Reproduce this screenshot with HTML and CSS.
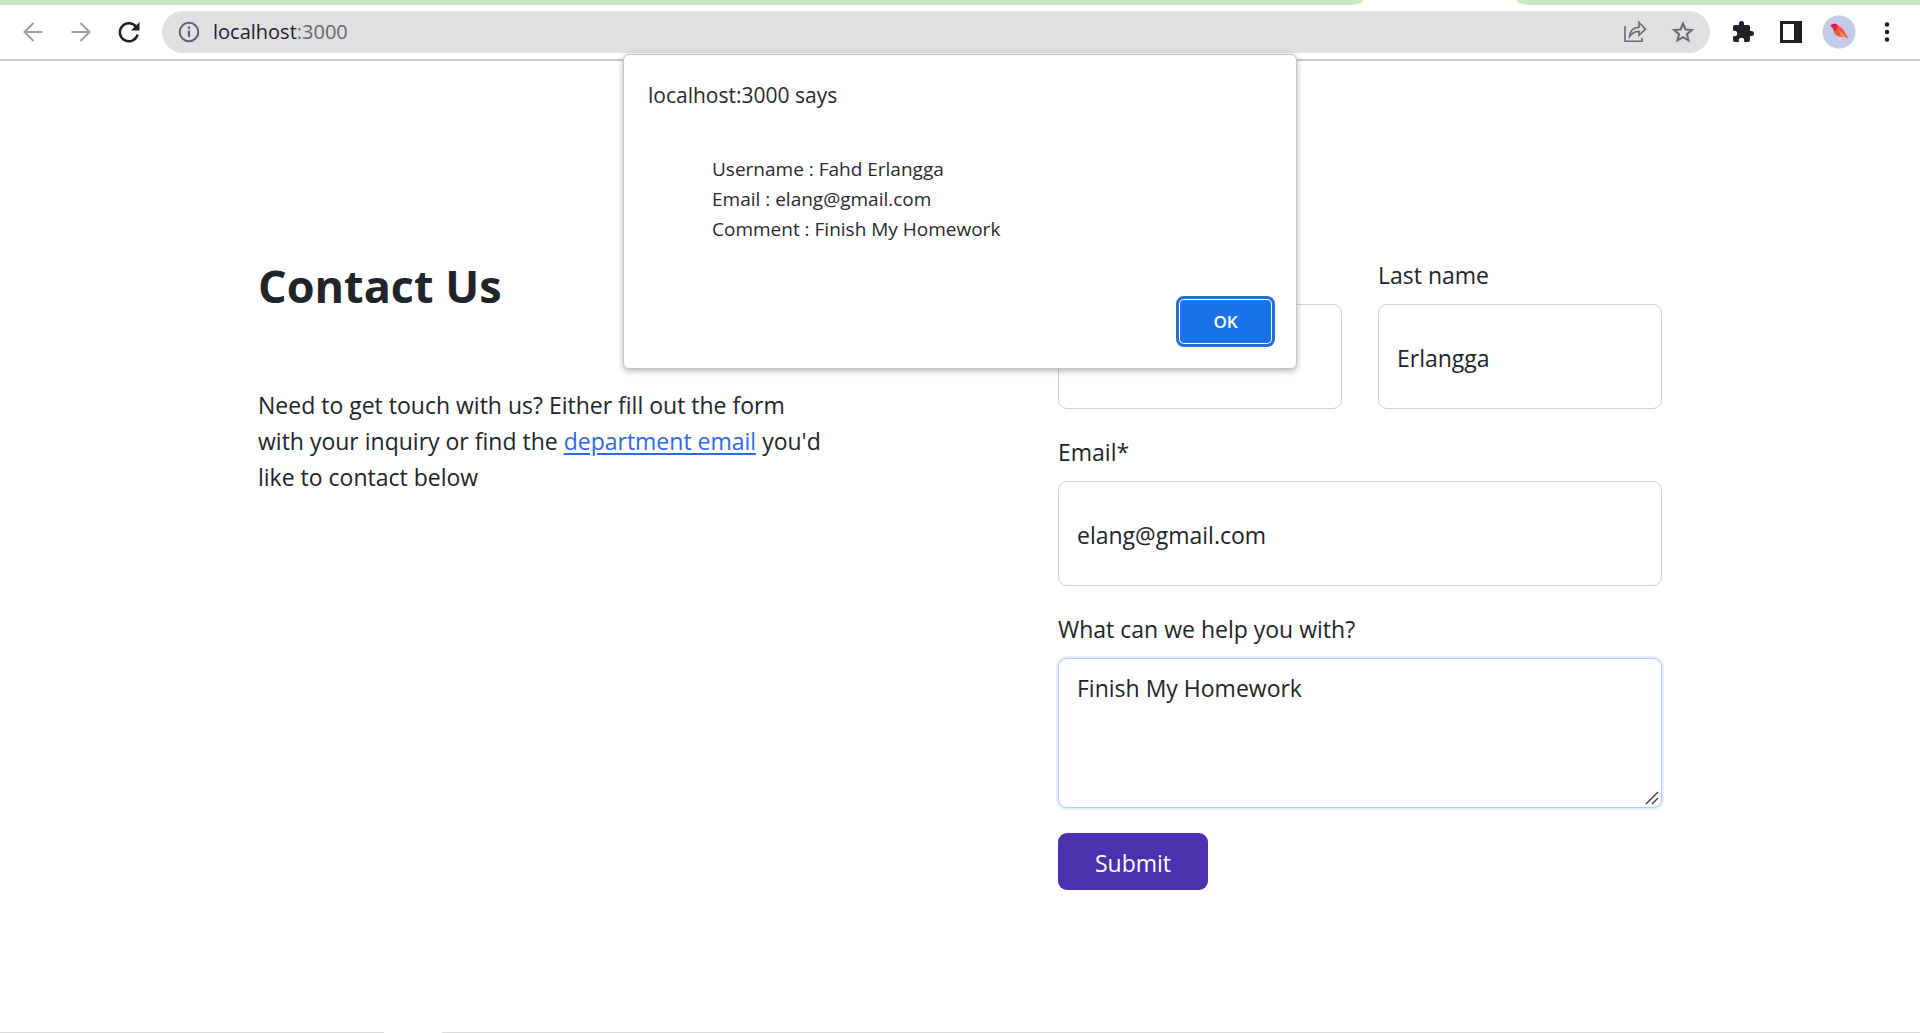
FILE: index.html
```html
<!DOCTYPE html>
<html lang="en">
<head>
<meta charset="utf-8">
<title>Contact Us</title>
<link rel="stylesheet" href="styles.css">
</head>
<body>
<header class="browser">
  <div class="tabs"><span class="tabs-before"></span><span class="tabs-after"></span></div>
  <div class="toolbar">
    <nav class="nav-buttons" aria-label="Browser navigation">
      <button class="icon-button muted" aria-label="Back"><svg width="24" height="24" viewBox="0 0 24 24" fill="none" stroke="currentColor" stroke-width="2"><path d="M21.500 12H3.500M12.500 3 3.500 12l9 9"/></svg></button>
      <button class="icon-button muted" aria-label="Forward"><svg width="24" height="24" viewBox="0 0 24 24" fill="none" stroke="currentColor" stroke-width="2"><path d="M2.500 12h18M11.500 3 20.500 12l-9 9"/></svg></button>
      <button class="icon-button" aria-label="Reload"><svg width="24" height="24" viewBox="0 0 24 24"><path d="M19.500 7.500A9 9 0 1 0 20.600 14.500" fill="none" stroke="currentColor" stroke-width="2.500"/><path d="M22.500 2v8.500h-8.500z" fill="currentColor"/></svg></button>
    </nav>
    <div class="address">
      <svg width="22" height="22" viewBox="0 0 22 22" fill="none" stroke="#5f6368" stroke-width="2"><circle cx="11" cy="11" r="9.300"/><path d="M11 9.500v6.500M11 5.500v2.500" stroke-width="2.200"/></svg>
      <span class="url">localhost<span class="port">:3000</span></span>
      <button class="icon-button soft" aria-label="Share"><svg width="24" height="24" viewBox="0 0 24 24" fill="none" stroke="currentColor" stroke-width="1.600"><path d="M2 6v15.200h17V18"/><path d="M6.500 16.500C7 10.500 10.500 7.500 16 7.200V2.500l6.500 6.700-6.500 6V11.500c-4.500-.2-7 1.500-9.500 5z"/></svg></button>
      <button class="icon-button soft" aria-label="Bookmark"><svg width="24" height="24" viewBox="0 0 24 24" fill="none" stroke="currentColor" stroke-width="2"><path d="m12 3.500 2.500 6 6.400.5-4.900 4.200 1.500 6.300-5.500-3.400-5.500 3.400L8 14.200 3.100 10l6.400-.5z"/></svg></button>
    </div>
    <div class="actions">
      <button class="icon-button" aria-label="Extensions"><svg width="24" height="24" viewBox="0 0 24 24" fill="currentColor"><path d="M20.500 11H19V7a2 2 0 0 0-2-2h-4V3.500a2.500 2.500 0 0 0-5 0V5H4a2 2 0 0 0-2 2v3.800h1.500a2.700 2.700 0 0 1 0 5.400H2V20a2 2 0 0 0 2 2h3.800v-1.500a2.700 2.700 0 0 1 5.400 0V22H17a2 2 0 0 0 2-2v-4h1.500a2.500 2.500 0 0 0 0-5z"/></svg></button>
      <button class="icon-button" aria-label="Side panel"><svg width="24" height="24" viewBox="0 0 24 24"><path d="M1 1h22v22H1z" fill="#202124"/><path d="M4 4h11v16H4z" fill="#fff"/></svg></button>
      <button class="icon-button avatar" aria-label="Profile"><svg width="34" height="34" viewBox="0 0 34 34"><circle cx="17" cy="17" r="16.500" fill="#c5cae9"/><path d="M8.500 11C9.500 8.300 13.500 8 15.500 10c3.500 2.500 6 4 7.500 7.500l3.500 5.500-4-1c-5.500.5-9.500-1-10.500-5.500-.4-2-.5-3.500-3.500-5.500z" fill="#f0573f"/><path d="M8.500 11C9.500 8.300 13.500 8 15.500 10c.5 2-.5 4.500-3.500 6.500-.8-2-.5-3.500-3.500-5.500z" fill="#dd1f4b"/><path d="m17 15 7 6.500-5 .3z" fill="#f98a55"/><path d="M16 22.500v3M18 22.500v3" stroke="#f0d3dd"/></svg></button>
      <button class="icon-button" aria-label="Menu"><svg width="24" height="24" viewBox="0 0 24 24" fill="currentColor"><circle cx="12" cy="4.500" r="2.300"/><circle cx="12" cy="12" r="2.300"/><circle cx="12" cy="19.500" r="2.300"/></svg></button>
    </div>
  </div>
</header>

<main class="page">
  <section class="intro">
    <h1>Contact Us</h1>
    <p>Need to get touch with us? Either fill out the form with your inquiry or find the <a href="#department">department email</a> you'd like to contact below</p>
  </section>
  <form class="contact-form">
    <div class="name-row">
      <div class="field"><label for="first">First name</label><input id="first" type="text"></div>
      <div class="field"><label for="last">Last name</label><input id="last" type="text" value="Erlangga"></div>
    </div>
    <div class="field"><label for="email">Email*</label><input id="email" type="email" value="elang@gmail.com"></div>
    <div class="field"><label for="comment">What can we help you with?</label><div class="comment-box"><textarea id="comment">Finish My Homework</textarea><svg class="grip" width="14" height="14" viewBox="0 0 14 14" stroke="#444" stroke-width="1.500"><path d="M1 13 13 1M7 13l6-6"/></svg></div></div>
    <button class="submit" type="button">Submit</button>
  </form>
</main>
<footer class="edge"><span></span><span></span></footer>

<dialog class="alert" open aria-labelledby="alert-title">
  <h2 id="alert-title">localhost:3000 says</h2>
  <div class="message">
    <p>Username : Fahd Erlangga</p>
    <p>Email : elang@gmail.com</p>
    <p>Comment : Finish My Homework</p>
  </div>
  <button class="ok" type="button">OK</button>
</dialog>
</body>
</html>
```
FILE: styles.css
```css
* { box-sizing: border-box; }
body {
  margin: 0;
  min-height: 100vh;
  display: flex;
  flex-direction: column;
  background: #fff;
  color: #212529;
  font: 23px/36px "Open Sans", "Noto Sans", sans-serif;
}
h1, h2, p { margin: 0; }
button, input, textarea { font: inherit; color: inherit; }
svg { display: block; }

/* browser bar */
.browser { border-bottom: 2px solid #c8c8c8; }
.tabs { display: flex; justify-content: space-between; height: 5px; }
.tabs span { background: #cce8c0; }
.tabs-before { width: 71%; border-bottom-right-radius: 12px 5px; }
.tabs-after { width: 21%; border-bottom-left-radius: 12px 5px; }
.toolbar { display: flex; align-items: center; padding: 6px 21px; }
.icon-button { padding: 0; border: 0; background: none; color: #202124; }
.icon-button.muted { color: #9c9c9e; }
.icon-button.soft { color: #6a6b6e; }
.nav-buttons { display: flex; gap: 24px; margin-right: 21px; }
.address {
  flex: 1;
  display: flex;
  align-items: center;
  gap: 24px;
  height: 42px;
  padding: 0 15px 0 16px;
  border-radius: 21px;
  background: #e0e0e2;
}
.url { flex: 1; margin-left: -11px; font-size: 20px; color: #202124; }
.port { color: #66676a; }
.actions { display: flex; align-items: center; gap: 24px; margin-left: 21px; }
.avatar { margin: 0 -5px; }

/* contact page */
.page {
  flex: 1;
  display: grid;
  grid-template-columns: 564fr 604fr;
  column-gap: 236px;
  align-content: start;
  width: 100%;
  max-width: 1440px;
  margin: 0 auto;
  padding: 196px 18px 48px;
}
h1 { font-size: 45px; line-height: 58px; font-weight: 700; }
.intro p { margin-top: 72px; }
a { color: #2b6be4; text-underline-offset: 3px; }
.contact-form { display: flex; flex-direction: column; gap: 25px; }
.name-row { display: grid; grid-template-columns: 1fr 1fr; gap: 36px; }
.field { display: flex; flex-direction: column; gap: 11px; }
.field input, .field textarea {
  width: 100%;
  border: 1px solid #ced4da;
  border-radius: 9px;
  background: #fff;
  outline: 0;
}
.field input { height: 105px; padding: 2px 18px 0; }
.comment-box { position: relative; }
.field textarea {
  display: block;
  height: 150px;
  padding: 11px 18px;
  border-color: #b3cbee;
  box-shadow: 0 0 0 2px #e6effd;
  resize: none;
}
.grip { position: absolute; right: 3px; bottom: 3px; }
.submit {
  align-self: flex-start;
  width: 150px;
  height: 57px;
  padding: 2px 0 0;
  border: 0;
  border-radius: 9px;
  background: #4b31af;
  color: #fff;
}
.edge { display: flex; justify-content: space-between; height: 1px; }
.edge span { width: 77%; background: #dcdcdc; }
.edge span:first-child { width: 20%; }

/* alert */
.alert {
  position: absolute;
  top: 54px;
  left: 0;
  right: 0;
  display: flex;
  flex-direction: column;
  width: 674px;
  margin: 0 auto;
  padding: 22px 24px;
  border: 1px solid #c4c4c4;
  border-radius: 6px;
  background: #fff;
  color: #292a2d;
  box-shadow: 0 2px 6px rgba(0, 0, 0, .3);
}
.alert h2 { font-size: 21px; line-height: 36px; font-weight: 400; }
.message { margin: 41px 64px 0; font-size: 19px; line-height: 30px; }
.ok {
  align-self: flex-end;
  width: 93px;
  height: 45px;
  margin: 55px 0 2px;
  padding: 0;
  border: 1px solid #fff;
  border-radius: 5px;
  outline: 3px solid #246fd4;
  background: #1a73e8;
  color: #fff;
  font-size: 17px;
  font-weight: 600;
}
```
